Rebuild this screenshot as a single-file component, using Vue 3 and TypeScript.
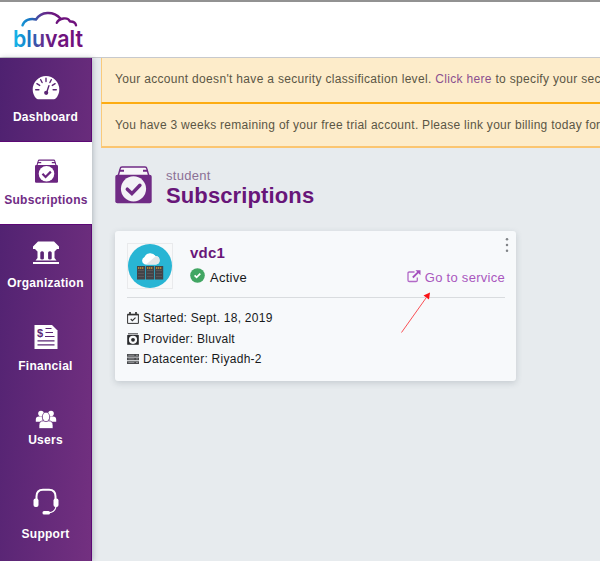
<script setup lang="ts">
interface NavItem {
  id: string
  label: string
}

const navItems: NavItem[] = [
  { id: 'dashboard', label: 'Dashboard' },
  { id: 'subscriptions', label: 'Subscriptions' },
  { id: 'organization', label: 'Organization' },
  { id: 'financial', label: 'Financial' },
  { id: 'users', label: 'Users' },
  { id: 'support', label: 'Support' },
]
const active = 'subscriptions'
</script>

<template>
  <div class="page">
    <header class="topbar">
      <svg class="logo" width="78" height="50" viewBox="0 0 78 50">
        <defs>
          <linearGradient id="brand" gradientUnits="userSpaceOnUse" x1="4" y1="0" x2="72" y2="0">
            <stop offset="0" stop-color="#16b9ea" />
            <stop offset="0.22" stop-color="#1778c4" />
            <stop offset="0.42" stop-color="#60308f" />
            <stop offset="0.6" stop-color="#6c147d" />
            <stop offset="1" stop-color="#71107c" />
          </linearGradient>
        </defs>
        <path d="M12.500 18.300C14 13.500 20 10.800 26 12.500C31 4.500 43 3.500 50.500 11.500M46.800 15.800C49 11 58 9.500 60 14.500C63.500 14.300 65.500 15.800 66 18.300" fill="none" stroke="url(#brand)" stroke-width="2.400" stroke-linecap="round" stroke-linejoin="round" />
        <text class="logo-text" x="3" y="39.500" textLength="70" lengthAdjust="spacingAndGlyphs" fill="url(#brand)">bluvalt</text>
      </svg>
    </header>

    <div class="body">
      <nav class="sidebar">
        <a v-for="item in navItems" :key="item.id" class="nav-item" :class="[item.id, { active: item.id === active }]">
          <svg v-if="item.id === 'dashboard'" class="nav-icon" width="28" height="26" viewBox="0 0 28 26">
            <path d="M4.400 24.600A13.300 13.300 0 1 1 23.600 24.600Q23 25.200 22 25.200H6Q5 25.200 4.400 24.600Z" fill="#fff" />
            <path d="M14 4.300v3.200M8.700 5.700l1.400 2.800M19.300 5.700l-1.400 2.800M4.900 9.700l2.800 1.700M23.100 9.700l-2.800 1.700M3.700 15.700h3.200M24.300 15.700h-3.200" stroke="#5b2675" stroke-width="1.400" stroke-linecap="round" />
            <path d="M16.900 11.700l-2 6" stroke="#5b2675" stroke-width="1.400" stroke-linecap="round" />
            <circle cx="14.200" cy="18.800" r="2.100" fill="#5b2675" />
          </svg>
          <svg v-else-if="item.id === 'subscriptions'" class="nav-icon" width="23" height="24" viewBox="0 0 37 38">
            <path d="M3.300 9.500 5.200 3Q5.500 1.500 7 1.500H30Q31.500 1.500 31.800 3L33.700 9.500" fill="#fff" stroke="#6b2580" stroke-width="1.700" />
            <path d="M4.500 5.500H10M27 5.500H32.500" stroke="#6b2580" stroke-width="2" />
            <rect x="0" y="9.300" width="37" height="28.500" rx="2" fill="#6b2580" />
            <circle cx="18.500" cy="23.500" r="12.500" fill="#fff" />
            <path d="M12 23.500l5 5 8.500-8.500" fill="none" stroke="#6b2580" stroke-width="3.500" />
          </svg>
          <svg v-else-if="item.id === 'organization'" class="nav-icon" width="28" height="24" viewBox="0 0 28 24">
            <path d="M6 .5H22L27 5.500V8H25L22.500 10.500V17L24.500 19.500H3.500L5.500 17V10.500L3 8H1V5.500Z" fill="#fff" />
            <path d="M8.300 17.500v-6a2 2 0 0 1 3.600 0v6Q11.900 18.500 10.100 18.500T8.300 17.500ZM16.100 17.500v-6a2 2 0 0 1 3.600 0v6Q19.700 18.500 17.900 18.500T16.100 17.500Z" fill="#5b2675" />
            <path d="M1 22h26" stroke="#fff" stroke-width="2" />
          </svg>
          <svg v-else-if="item.id === 'financial'" class="nav-icon" width="24" height="24" viewBox="0 0 24 24">
            <path d="M.5 0H18L23.500 5.500V24H.5Z" fill="#fff" />
            <path d="M11.500 3.500h6M11.500 7.500h7.500M11 11.500h9.500M3.500 15.800h17M3.500 19.800h17" stroke="#5b2675" stroke-width="1.200" />
            <text class="dollar" x="3" y="11.600" fill="#5b2675">$</text>
          </svg>
          <svg v-else-if="item.id === 'users'" class="nav-icon" width="22" height="19" viewBox="0 0 22 19">
            <g fill="#fff">
              <circle cx="6" cy="3.600" r="2.800" />
              <circle cx="16" cy="3.600" r="2.800" />
              <path d="M.8 11.800V9.500Q.8 6.600 4 6.600H7L8 11.800ZM21.200 11.800V9.500Q21.200 6.600 18 6.600H15L14 11.800Z" />
            </g>
            <g fill="#fff" stroke="#602878" stroke-width=".7">
              <path d="M4 18.500V15.500Q4 10.900 8 10.900H14Q18 10.900 18 15.500V18.500Z" />
              <ellipse cx="11" cy="6.900" rx="3.700" ry="4.700" />
            </g>
          </svg>
          <svg v-else class="nav-icon" width="26" height="28" viewBox="0 0 26 28">
            <path d="M3.500 11V8.500Q3.500 1.800 10 1.800H16Q22.500 1.800 22.500 8.500V11" fill="none" stroke="#fff" stroke-width="2" />
            <rect x=".5" y="10.500" width="5" height="8.500" rx="2" fill="#fff" />
            <rect x="20.500" y="10.500" width="5" height="8.500" rx="2" fill="#fff" />
            <path d="M23 18.500Q22 24.200 16 24.800" fill="none" stroke="#fff" stroke-width="1.200" />
            <rect x="9.500" y="23" width="7.500" height="3.500" rx="1.500" fill="#fff" />
          </svg>
          <span>{{ item.label }}</span>
        </a>
      </nav>

      <main class="content">
        <section class="notices">
          <p class="notice">Your account doesn't have a security classification level. <a>Click here</a> to specify your sec</p>
          <p class="notice">You have 3 weeks remaining of your free trial account. Please link your billing today for</p>
        </section>

        <section class="heading">
          <svg width="37" height="38" viewBox="0 0 37 38">
            <path d="M3.300 9.500 5.200 2.500Q5.500 1 7 1H30Q31.500 1 31.800 2.500L33.700 9.500" fill="#f8f6fa" stroke="#702b85" stroke-width="1.400" />
            <path d="M4.500 4.800H9M28 4.800H32.500" stroke="#702b85" stroke-width="2" />
            <rect x=".3" y="8.800" width="36.400" height="28.500" rx="2" fill="#702b85" />
            <circle cx="18.500" cy="22.800" r="12.600" fill="#f3f2f6" />
            <path d="M12.300 23.200l4.600 4.400 8-8.300" fill="none" stroke="#702b85" stroke-width="3.500" stroke-linecap="round" />
          </svg>
          <div>
            <div class="org">student</div>
            <h1>Subscriptions</h1>
          </div>
        </section>

        <article class="card">
          <div class="card-top">
            <svg class="thumb" width="46" height="46" viewBox="0 0 46 46">
              <rect x=".5" y=".5" width="45" height="45" fill="#f8f9fa" stroke="#e9eaec" />
              <circle cx="23" cy="23" r="22" fill="#28b5d4" />
              <path d="M18 21.500a4 4 0 0 1-.5-7.500 6.300 6.300 0 0 1 11-1 4.300 4.300 0 0 1 .5 8.500Z" fill="#fff" />
              <path d="M19 21.500L29 13a4.300 4.300 0 0 1 0 8.500Z" fill="#e3e6e9" />
              <g v-for="n in 3" :key="n" :transform="`translate(${1 + n * 9} 23)`">
                <rect width="8.200" height="13.500" fill="#444449" />
                <path d="M1 2h6" stroke="#d49a2c" stroke-width="1.300" stroke-dasharray="1.200 .7" />
                <path d="M1 4.500h6M1 7.500h6M1 10.500h6" stroke="#5e5b5d" stroke-width=".8" />
              </g>
            </svg>
            <div class="info">
              <h2>vdc1</h2>
              <div class="status">
                <svg width="15" height="15" viewBox="0 0 15 15">
                  <circle cx="7.500" cy="7.500" r="7.300" fill="#41a663" />
                  <path d="M4.600 7.300l2 2 3.700-3.700" fill="none" stroke="#fff" stroke-width="1.700" />
                </svg>
                <span>Active</span>
              </div>
            </div>
            <div class="actions">
              <svg class="dots" width="4" height="16" viewBox="0 0 4 16" fill="#818488">
                <circle cx="2" cy="2.200" r="1.250" /><circle cx="2" cy="8" r="1.250" /><circle cx="2" cy="13.800" r="1.250" />
              </svg>
              <a class="service">
                <svg width="14" height="13" viewBox="0 0 14 13">
                  <path d="M7.500 2H2.300Q1 2 1 3.300V10.200Q1 11.500 2.300 11.500H9Q10.300 11.500 10.300 10.200V7.500" fill="none" stroke="#b269c7" stroke-width="1.300" />
                  <path d="M5.800 7.500L11.500 1.800" stroke="#a44fbd" stroke-width="1.800" />
                  <path d="M8.500.2H13.500V5.200Z" fill="#a44fbd" />
                </svg>
                <span>Go to service</span>
              </a>
            </div>
          </div>
          <ul class="details">
            <li>
              <svg width="12" height="12" viewBox="0 0 12 12" fill="none" stroke="#333">
                <path d="M.6 2.400h10.800v9H.6Z" stroke-width="1" />
                <path d="M.5 2.600h11" stroke-width="1.600" />
                <path d="M3 0v3M9 0v3" stroke-width="1.700" />
                <path d="M3.700 7l1.700 1.700L8.500 5.600" stroke-width="1.100" />
              </svg>
              Started: Sept. 18, 2019
            </li>
            <li>
              <svg width="12" height="12" viewBox="0 0 12 12">
                <path d="M1 .5h10M1 2h10" stroke="#55575b" stroke-width=".8" />
                <rect x=".2" y="2" width="11.600" height="9.700" rx=".5" fill="#292a2d" />
                <circle cx="6" cy="6.800" r="4.100" fill="#f8f9fa" />
                <circle cx="6" cy="6.800" r="1.900" fill="#292a2d" />
              </svg>
              Provider: Bluvalt
            </li>
            <li>
              <svg width="12" height="12" viewBox="0 0 12 12">
                <path d="M0 1h12v2.700H0ZM0 4.600h12v2.700H0ZM0 8.200h12v2.700H0Z" fill="#4a4b4e" />
                <path d="M1.300 2.300h6M1.300 5.900h6M1.300 9.500h6" stroke="#a5a6a9" stroke-width=".7" />
                <path d="M9.500 2.300h1M9.500 5.900h1M9.500 9.500h1" stroke="#e5e6e8" stroke-width=".9" />
              </svg>
              Datacenter: Riyadh-2
            </li>
          </ul>
          <svg class="pointer" width="32" height="44" viewBox="0 0 32 44">
            <path d="M1.500 41.500L26 7" stroke="#fa5055" stroke-width="1" />
            <path d="M30 1.500L23.500 4.500L29 8.500Z" fill="#fb1216" />
          </svg>
        </article>
      </main>
    </div>
  </div>
</template>

<style>
body {
  overflow: hidden;
}
</style>

<style scoped>
.page {
  box-sizing: border-box;
  width: 600px;
  height: 561px;
  overflow: hidden;
  display: flex;
  flex-direction: column;
  background: #e7ebee;
  font-family: "Liberation Sans", Arial, sans-serif;
  font-size: 12px;
  letter-spacing: 0.27px;
}

.topbar {
  box-sizing: border-box;
  flex: none;
  height: 58px;
  padding: 5px 0 0 10px;
  background: #fff;
  border-top: 2px solid #929292;
  border-bottom: 1px solid #c7c9cd;
}

.logo {
  display: block;
}

.logo-text {
  font-family: Inter, sans-serif;
  font-size: 23px;
  font-weight: 600;
  letter-spacing: 0;
}

.body {
  display: flex;
  flex: 1;
  min-height: 0;
}

.sidebar {
  box-sizing: border-box;
  flex: none;
  width: 92px;
  display: flex;
  flex-direction: column;
  background: linear-gradient(95deg, #4e2170, #733080);
  border-right: 1px solid #5c0875;
  box-shadow: 1px 0 5px rgba(40, 50, 70, 0.28);
}

.nav-item {
  box-sizing: border-box;
  flex: none;
  display: flex;
  flex-direction: column;
  align-items: center;
  justify-content: flex-end;
  height: 83px;
  padding-bottom: 17px;
  color: #fff;
  font-weight: bold;
  line-height: 14px;
  letter-spacing: 0.27px;
  white-space: nowrap;
}

.nav-icon {
  flex: none;
  display: block;
  margin-bottom: 10px;
}

.active {
  width: 92px;
  background: #fff;
  color: #702b85;
  border-top: 1px solid #5c0875;
}

.organization {
  border-top: 1px solid #5c0875;
}

.organization .nav-icon {
  margin-bottom: 11px;
}

.users {
  height: 74px;
}

.users .nav-icon {
  margin-bottom: 4px;
}

.support {
  height: 94px;
}

.support .nav-icon {
  margin-bottom: 11px;
}

.dollar {
  font-size: 11px;
  font-weight: bold;
  letter-spacing: 0;
}

.content {
  flex: none;
  width: 508px;
  padding-left: 9px;
}

.notices {
  width: 520px;
}

.notice {
  box-sizing: border-box;
  margin: 0;
  height: 45px;
  padding: 14px 13px;
  background: #fdecca;
  border: 1px solid #f9ca7b;
  border-bottom-color: #fdac12;
  border-top: 0;
  color: #5b5645;
  line-height: 15px;
  letter-spacing: 0.32px;
  white-space: nowrap;
}

.notice + .notice {
  border-top: 1px solid #fdac12;
  border-bottom: 2px solid #fbc570;
  letter-spacing: 0.28px;
}

.notice a {
  color: #8b508f;
}

.heading {
  display: flex;
  gap: 14px;
  padding: 18px 0 0 14px;
}

.org {
  margin-top: 2px;
  font-size: 13px;
  line-height: 16px;
  color: #8b7095;
}

h1 {
  margin: 0;
  font-size: 22px;
  line-height: 24px;
  letter-spacing: 0.12px;
  color: #681679;
}

.card {
  position: relative;
  box-sizing: border-box;
  width: 401px;
  height: 150px;
  margin: 23px 0 0 14px;
  padding: 12px 11px 12px 12px;
  background: #f7f9fb;
  border-radius: 3px;
  box-shadow: 0 2px 6px rgba(60, 75, 90, 0.2);
}

.card-top {
  box-sizing: border-box;
  display: flex;
  height: 55px;
  border-bottom: 1px solid #d9dcdf;
}

.info {
  margin-left: 17px;
}

h2 {
  margin: 0;
  padding-top: 1px;
  font-size: 15px;
  line-height: 18px;
  letter-spacing: 0.25px;
  color: #681679;
}

.status {
  display: flex;
  align-items: center;
  gap: 5px;
  margin-top: 8px;
  font-size: 13px;
  line-height: 15px;
  color: #18191b;
}

.status svg {
  margin-top: -4px;
}

.actions {
  display: flex;
  flex-direction: column;
  align-items: flex-end;
  margin-left: auto;
}

.dots {
  margin: -6px -4px 16px 0;
}

.service {
  display: flex;
  align-items: center;
  gap: 4px;
  font-size: 13px;
  line-height: 17px;
  letter-spacing: 0.28px;
  color: #a957be;
}

.service svg {
  margin-top: -2px;
}

.details {
  margin: 10px 0 0;
  padding: 0;
  list-style: none;
  color: #18191b;
}

.details li {
  display: flex;
  align-items: center;
  gap: 4px;
  height: 20.5px;
}

.pointer {
  position: absolute;
  left: 285px;
  top: 60px;
}
</style>
